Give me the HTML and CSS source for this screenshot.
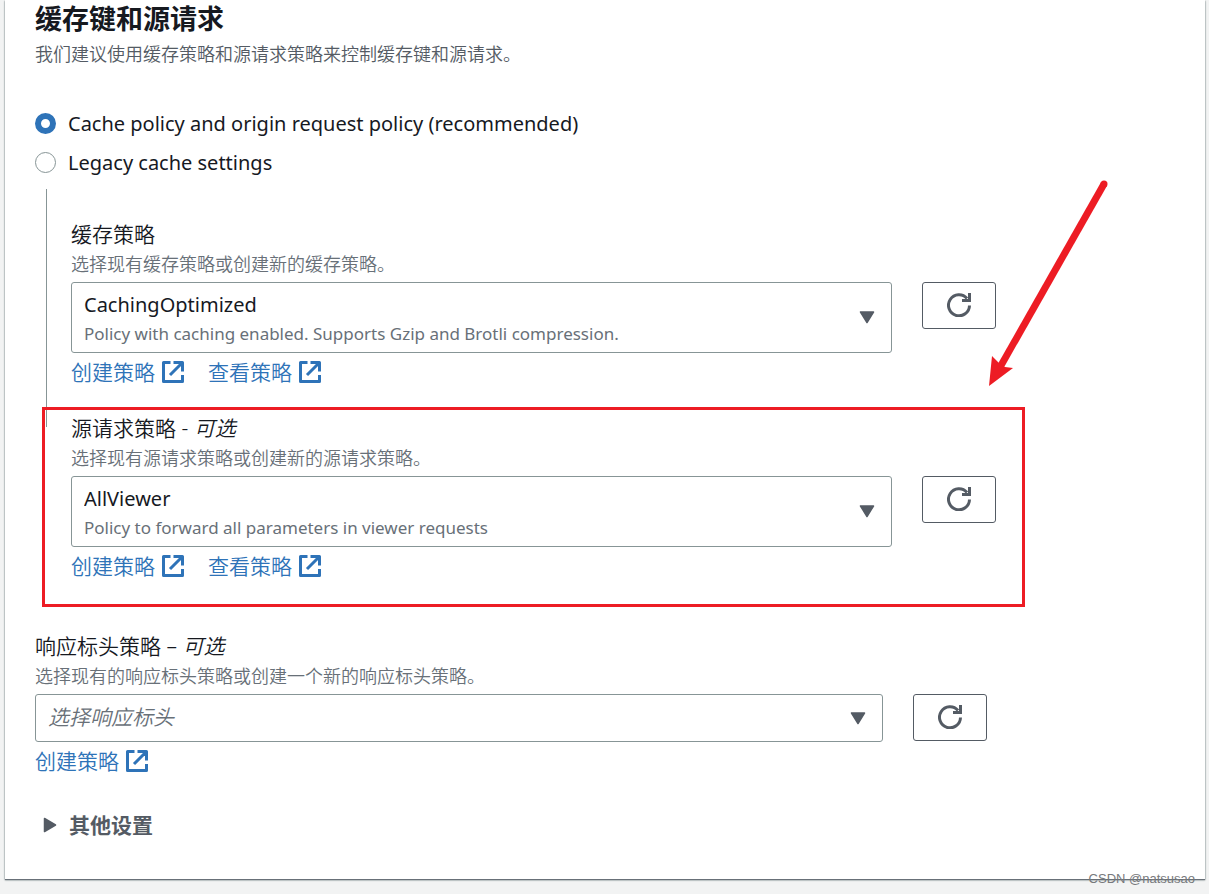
FILE: index.html
```html
<!DOCTYPE html>
<html lang="zh-CN">
<head>
    <meta charset="UTF-8">
    <meta name="viewport" content="width=device-width, initial-scale=1.0">
    <title>缓存键和源请求</title>
    <link rel="stylesheet" href="styles.css">
</head>
<body>
    <!-- shared icons -->
    <svg class="sprite" aria-hidden="true">
        <symbol id="icon-external" viewBox="0 0 22 22">
            <path d="M8.5 1.5h-7v19h19V14M11.5 1.5h9v9M20 2L8 14" fill="none" stroke="currentColor" stroke-width="3" stroke-linejoin="round"/>
        </symbol>
        <symbol id="icon-refresh" viewBox="0 0 24 24">
            <path d="M22.5 12.5A10.5 10.5 0 1 1 20 5.5" fill="none" stroke="currentColor" stroke-width="3"/>
            <path d="M21 0h3v9h-9V6h6z" fill="currentColor"/>
        </symbol>
        <symbol id="icon-caret" viewBox="0 0 16 13">
            <path d="M1.5 1h13L8 11.5z" fill="currentColor" stroke="currentColor" stroke-width="1.5" stroke-linejoin="round"/>
        </symbol>
    </svg>

    <main class="card">
        <h2 class="title">缓存键和源请求</h2>
        <p class="subtitle">我们建议使用缓存策略和源请求策略来控制缓存键和源请求。</p>

        <div class="radios">
            <label class="radio"><input type="radio" name="mode" checked>Cache policy and origin request policy (recommended)</label>
            <label class="radio"><input type="radio" name="mode">Legacy cache settings</label>
        </div>

        <div class="nested">
            <section class="field">
                <label class="label" for="cache-policy">缓存策略</label>
                <p class="hint">选择现有缓存策略或创建新的缓存策略。</p>
                <div class="row">
                    <div class="select">
                        <select id="cache-policy"><option>CachingOptimized</option></select>
                        <span class="detail">Policy with caching enabled. Supports Gzip and Brotli compression.</span>
                        <svg class="caret"><use href="#icon-caret"/></svg>
                    </div>
                    <button class="refresh" type="button" aria-label="刷新"><svg><use href="#icon-refresh"/></svg></button>
                </div>
                <div class="links">
                    <a href="#">创建策略<svg><use href="#icon-external"/></svg></a>
                    <a href="#">查看策略<svg><use href="#icon-external"/></svg></a>
                </div>
            </section>

            <section class="field">
                <label class="label" for="origin-policy">源请求策略 - <i>可选</i></label>
                <p class="hint">选择现有源请求策略或创建新的源请求策略。</p>
                <div class="row">
                    <div class="select">
                        <select id="origin-policy"><option>AllViewer</option></select>
                        <span class="detail">Policy to forward all parameters in viewer requests</span>
                        <svg class="caret"><use href="#icon-caret"/></svg>
                    </div>
                    <button class="refresh" type="button" aria-label="刷新"><svg><use href="#icon-refresh"/></svg></button>
                </div>
                <div class="links">
                    <a href="#">创建策略<svg><use href="#icon-external"/></svg></a>
                    <a href="#">查看策略<svg><use href="#icon-external"/></svg></a>
                </div>
            </section>
        </div>

        <section class="field">
            <label class="label" for="header-policy">响应标头策略 – <i>可选</i></label>
            <p class="hint">选择现有的响应标头策略或创建一个新的响应标头策略。</p>
            <div class="row row-wide">
                <div class="select select-empty">
                    <select id="header-policy"><option>选择响应标头</option></select>
                    <svg class="caret"><use href="#icon-caret"/></svg>
                </div>
                <button class="refresh" type="button" aria-label="刷新"><svg><use href="#icon-refresh"/></svg></button>
            </div>
            <div class="links">
                <a href="#">创建策略<svg><use href="#icon-external"/></svg></a>
            </div>
        </section>

        <details class="more">
            <summary><svg viewBox="0 0 14 16"><path d="M1.5 1.5L12.5 8L1.5 14.5z" fill="currentColor" stroke="currentColor" stroke-width="1.5" stroke-linejoin="round"/></svg>其他设置</summary>
        </details>
    </main>

    <!-- annotations over the form -->
    <div class="highlight"></div>
    <svg class="arrow" viewBox="0 0 124 210" aria-hidden="true">
        <path d="M117 7L12 192" stroke="#ed1c24" stroke-width="7"/>
        <circle cx="117" cy="7" r="3.5" fill="#ed1c24"/>
        <path d="M2 209L5 179L12 186L18 190L26 191Z" fill="#ed1c24"/>
    </svg>
    <span class="watermark">CSDN @natsusao</span>
</body>
</html>
```

FILE: styles.css
```css
* {
    box-sizing: border-box;
}

body {
    margin: 0;
    position: relative;
    min-height: 100vh;
    background: #f2f3f3;
    color: #16191f;
    font-family: "Noto Sans", "Noto Sans CJK SC", sans-serif;
    font-size: 20px;
}

.sprite {
    display: none;
}

.card {
    margin: 0 4px 0 5px;
    padding: 0 30px 39px;
    background: #fff;
    box-shadow: 0 1px 1px #687078, 0 1px 2px #879596;
}

h2, p {
    margin: 0;
}

.title {
    font-size: 27px;
    line-height: 38px;
    font-weight: 700;
}

.subtitle,
.hint {
    font-family: "Noto Sans CJK SC", sans-serif;
    font-size: 18px;
    font-weight: 350;
}

.subtitle {
    line-height: 30px;
    color: #545b64;
}

.hint {
    margin-bottom: 5px;
    line-height: 28px;
    color: #687078;
}

.radios {
    margin-top: 36px;
}

.radio {
    display: flex;
    align-items: center;
    gap: 12px;
    height: 39px;
}

.radio input {
    appearance: none;
    width: 21px;
    height: 21px;
    margin: 0;
    border: 1px solid #879596;
    border-radius: 50%;
    background: #fff;
}

.radio input:checked {
    border: 6px solid #2e73b8;
}

/* the guide line stops at the second field's label */
.nested {
    margin: 7px 0 24px 11px;
    padding: 30px 0 0 25px;
    background: linear-gradient(#879596, #879596) no-repeat 0 0 / 1px 238px;
}

.field {
    padding-bottom: 22px;
}

.label {
    display: block;
    font-size: 21px;
    font-weight: 350;
    line-height: 30px;
}

.row {
    display: grid;
    grid-template-columns: minmax(0, 1fr) 74px;
    gap: 30px;
    align-items: start;
    margin-right: 179px;
}

.row-wide {
    margin-right: 188px;
}

/* select, detail line and caret share one grid cell */
.select {
    display: grid;
    height: 71px;
}

.select > * {
    grid-area: 1 / 1;
}

.select select {
    appearance: none;
    width: 100%;
    padding: 0 48px 26px 12px;
    border: 1px solid #879596;
    border-radius: 3px;
    background: #fff;
    color: #16191f;
    font: inherit;
}

.detail {
    align-self: end;
    padding: 0 48px 6px 13px;
    font-size: 17px;
    line-height: 26px;
    color: #687078;
    pointer-events: none;
}

.caret {
    align-self: center;
    justify-self: end;
    width: 16px;
    height: 13px;
    margin-right: 17px;
    color: #545b64;
    pointer-events: none;
}

.select-empty {
    height: 48px;
}

.select-empty select {
    padding-bottom: 2px;
    color: #687078;
    font-size: 21px;
    font-style: italic;
    font-weight: 350;
}

.refresh {
    display: flex;
    align-items: center;
    justify-content: center;
    height: 47px;
    padding: 0 0 1px;
    border: 1px solid #545b64;
    border-radius: 3px;
    background: #fff;
    color: #545b64;
}

.refresh svg {
    width: 24px;
    height: 24px;
}

.links {
    display: flex;
    gap: 24px;
}

.links a {
    display: flex;
    align-items: center;
    gap: 7px;
    color: #2e73b8;
    font-size: 21px;
    font-weight: 350;
    line-height: 38px;
    text-decoration: none;
}

.links svg {
    width: 22px;
    height: 22px;
}

.more {
    margin-top: 8px;
    color: #545b64;
}

.more summary {
    display: flex;
    align-items: center;
    gap: 12px;
    padding-left: 8px;
    font-size: 21px;
    font-weight: 700;
    line-height: 30px;
}

.more svg {
    width: 14px;
    height: 16px;
}

.highlight {
    position: absolute;
    top: 407px;
    left: 42px;
    right: 184px;
    height: 200px;
    border: 3px solid #ed1c24;
    pointer-events: none;
}

.arrow {
    position: absolute;
    top: 177px;
    left: 987px;
    width: 124px;
    height: 210px;
    pointer-events: none;
}

.watermark {
    position: absolute;
    top: 871px;
    right: 14px;
    color: #77797c;
    font-family: "Liberation Sans", sans-serif;
    font-size: 13px;
    line-height: 16px;
}
```
